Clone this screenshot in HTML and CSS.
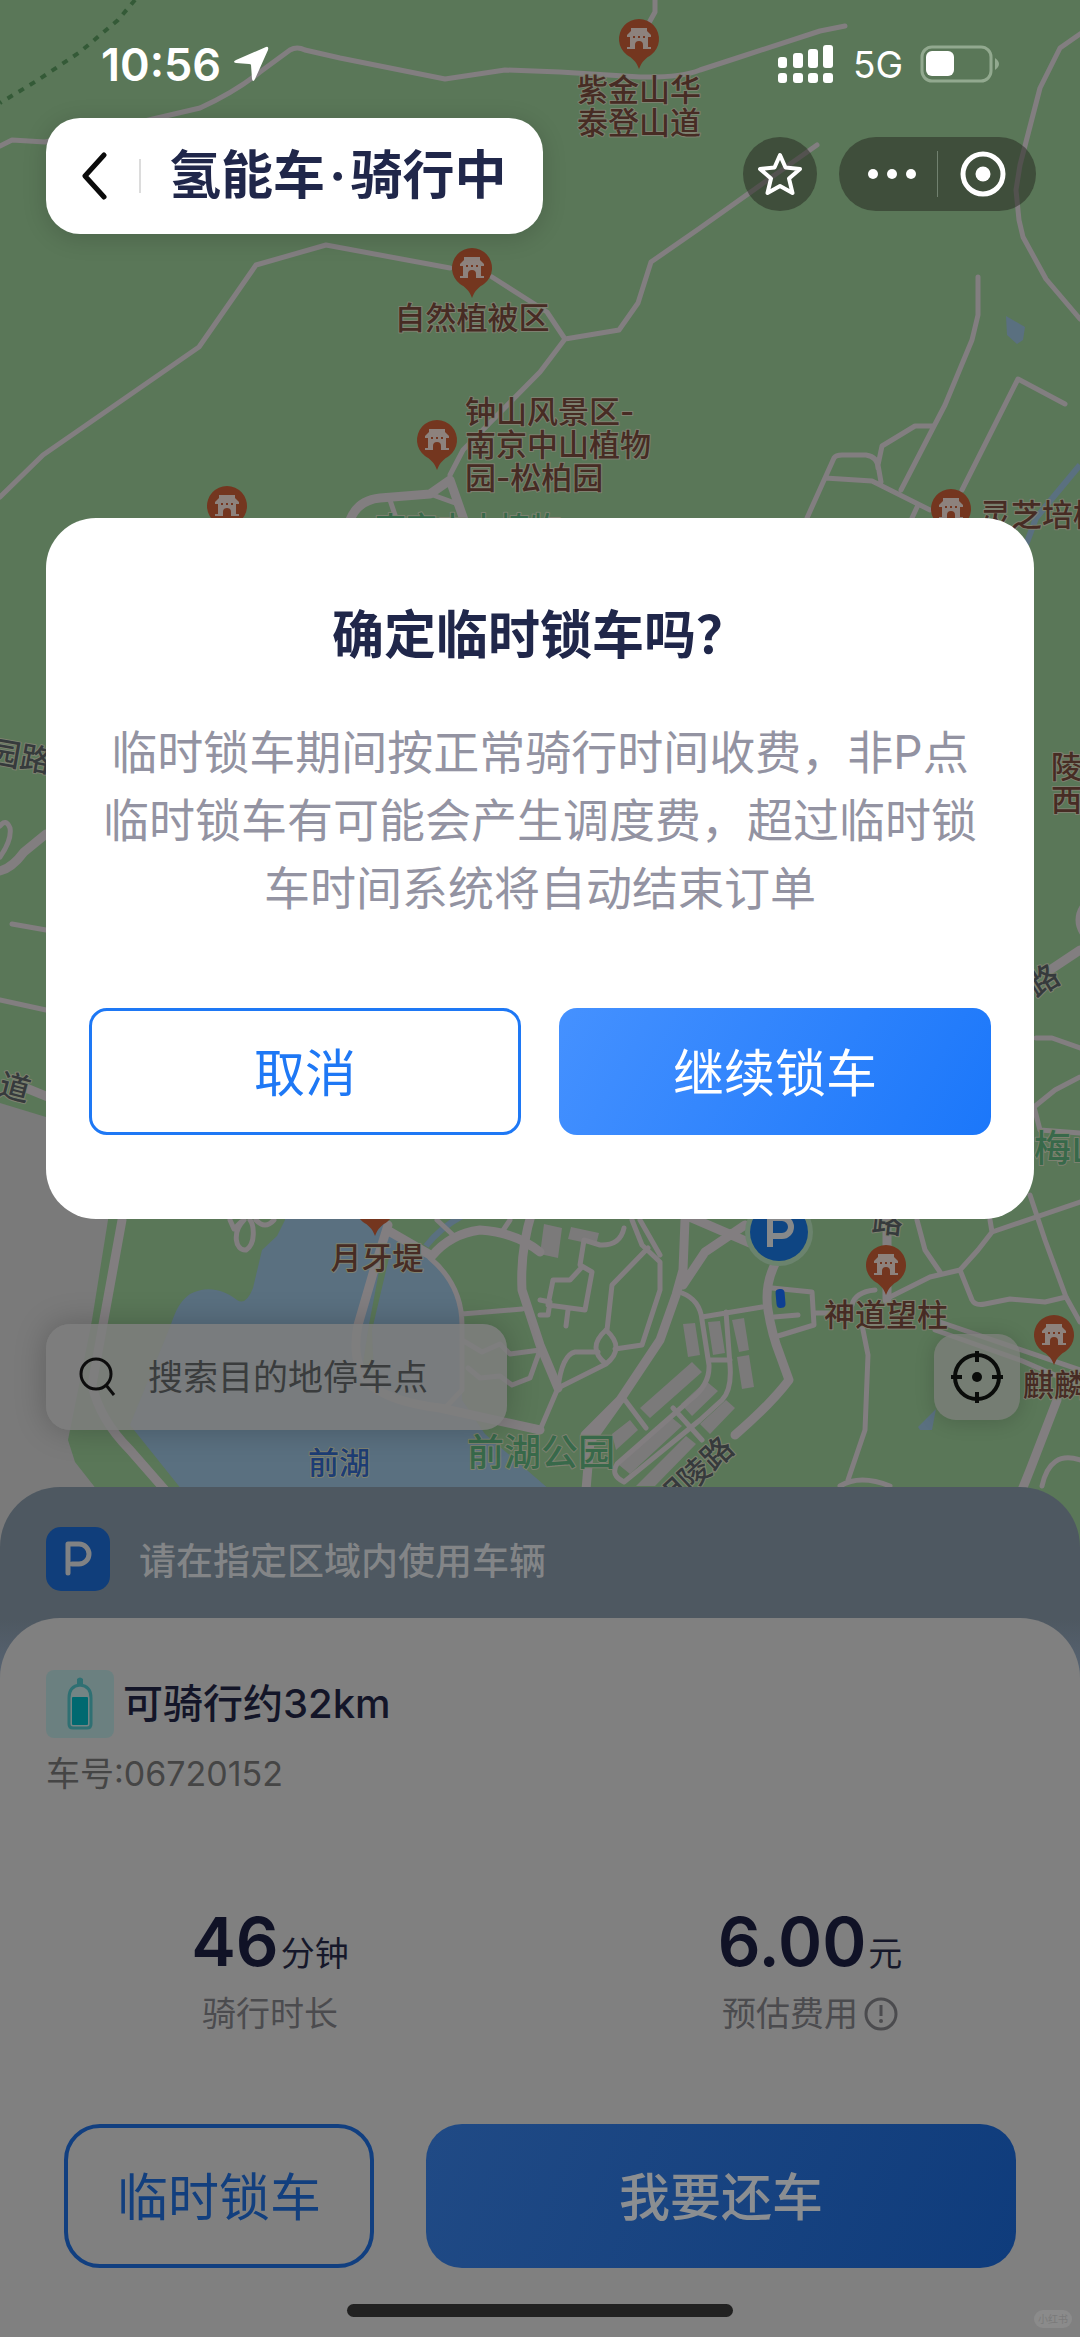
FILE: index.html
```html
<!DOCTYPE html>
<html lang="zh-CN">
<head>
<meta charset="utf-8">
<meta name="viewport" content="width=device-width, initial-scale=1">
<title>氢能车·骑行中</title>
<link rel="stylesheet" href="styles.css">
</head>
<body>
<div class="screen">
  <main class="stage">
    <svg class="map" viewBox="0 0 1080 1700" preserveAspectRatio="xMidYMin slice" aria-hidden="true">
      <defs>
        <g id="pin">
          <path d="M0 30C-3 22-7 19-12 16A20 20 0 1 1 12 16C7 19 3 22 0 30Z" fill="#74361f"/>
          <path d="M-8-11H8V-8L12-4V-2H9V8H12V10H4V6A4 4 0 0 0-4 6V10H-12V8H-9V-2H-12V-4L-8-8Z" fill="#8d827d"/>
          <path d="M-6-3h2v2h-2zM-1-3h2v2h-2zM4-3h2v2h-2z" fill="#74361f"/>
        </g>
      </defs>
      <rect width="1080" height="1700" fill="#5a7758"/>
      <path fill="#7a7a7a" d="M0 1103L46 1117L112 1150L108 1220L92 1320L68 1440L75 1462L97 1490L130 1540L130 1700H0Z"/>
      <g fill="#5a7080">
        <path d="M285 1200V1220L277 1236L262 1250L253 1288Q246 1306 237 1300C222 1288 205 1286 190 1294C176 1304 174 1318 168 1332L130 1425L182 1490H550L485 1434L462 1400V1320C460 1290 440 1262 420 1250L390 1236L372 1200Z"/>
        <path d="M1006 316L1025 327L1023 340L1017 344L1007 335ZM918 1427L936 1409L932 1430H920Z"/>
      </g>
      <path d="M1080 465L1055 495L1036 518L1026 545M426 1246Q440 1228 462 1216" stroke="#5a7080" stroke-width="6" fill="none"/>
      <path d="M383 1250L368 1330L362 1370L374 1376L372 1330L389 1258Z" fill="#5a7758"/>
      <path d="M135 0L118 20L80 52L38 80L0 103" stroke="#345a37" stroke-width="4" stroke-dasharray="6 7" fill="none"/>
      <g class="lots">
        <path d="M683 1324l12-1 5 32-12 2zM708 1322l12-1 5 32-12 2zM732 1320l12-2 5 32-10 2zM737 1357l12-2 5 32-12 2z"/>
        <path d="M640 1408L692 1362L702 1372L650 1418ZM681 1404L706 1381L718 1391L692 1416ZM700 1424L726 1400L735 1408L710 1434ZM619 1465L671 1417L682 1426L630 1474ZM612 1434L630 1420L638 1430L616 1450ZM636 1486L686 1436L696 1444L655 1486Z"/>
        <path d="M571 1227l28 6-3 12-28-6zM544 1224l18 4-4 30-18-4z"/>
      </g>
      <g class="road">
        <path d="M0 146L12 140L45 142L140 122L200 108Q235 92 260 72L290 50Q297 46 305 50L340 58L445 79L505 70L560 72L640 77Q680 78 700 70L740 57L820 31L845 26M655 0V12L645 30"/>
        <path d="M1080 34L1060 48L1040 88L1020 165L1016 190L1019 220L1023 237L1046 279L1080 319"/>
        <path d="M817 145L700 228L651 262L638 303L619 330L565 339L540 372L463 450L450 475M565 339L547 312L492 277M450 268L326 245L256 265L199 347L43 455L0 497"/>
        <path d="M390 500L396 518M430 494L455 503M978 277V315L972 340L945 405L932 430L901 490M932 426H915L882 446L878 465L881 482M807 518L825 478L834 458Q836 455 842 455H866Q878 457 878 468M825 478L872 481L930 510M1065 404L1018 379L962 490M918 505L912 518"/>
        <path d="M0 857Q12 840 10 828Q6 818 0 826M12 924L46 930M0 1000L46 1010M1036 1038H1052L1080 1048M1080 1077L1055 1090L1034 1107L1040 1130L1080 1133M1030 1195L1045 1240L1066 1297L1080 1322"/>
        <path d="M244 1220C232 1232 235 1251 246 1250C256 1244 254 1225 250 1220M230 1220L234 1229L241 1222M256 1220Q265 1230 274 1220"/>
        <path d="M430 1258Q462 1285 462 1325V1390L445 1408M462 1314L522 1309M437 1220L453 1235M510 1220L502 1232M462 1340L482 1352L500 1344L510 1354L540 1350L530 1378L512 1385L500 1376L480 1378L468 1368"/>
        <path d="M632 1220L642 1245L660 1262V1290L642 1345L615 1349M640 1220L660 1255M624 1228Q620 1246 600 1245L584 1240L580 1265L592 1272L585 1310L548 1305L553 1280H570L582 1267M648 1248L612 1285L607 1330M606 1330Q586 1348 606 1364Q626 1348 606 1330M598 1352L575 1352Q562 1355 558 1388M606 1364L558 1388L540 1430M568 1310L566 1326M540 1300L550 1302L548 1315H540"/>
        <path d="M682 1293Q700 1300 702 1320L709 1365Q710 1385 690 1400L617 1464Q610 1475 624 1482L700 1420L722 1400Q732 1390 730 1365L726 1312M702 1317L762 1307M709 1360H730M673 1408L702 1440M625 1400L646 1428M772 1288L812 1292L814 1325L778 1336M774 1317L798 1315M814 1313H830"/>
        <path d="M852 1305Q855 1292 875 1290M888 1298L930 1277L960 1270L978 1250L992 1232L1080 1202M917 1220L925 1250L940 1272M960 1270L972 1300Q975 1306 985 1304L1010 1299L1045 1302L1066 1297M992 1232L990 1220M862 1325L868 1355L865 1430L848 1480M840 1486Q860 1474 890 1486M940 1322L1080 1370M935 1330L1020 1360L1080 1386M1042 1486Q1050 1450 1080 1460"/>
      </g>
      <g class="road road-wide">
        <path d="M350 520Q358 500 380 498L430 494L450 480L464 520"/>
        <path d="M0 871Q12 868 24 852L46 834M26 1088L48 1097M1080 950L1050 970M1090 900Q1070 920 1090 940"/>
        <path d="M122 1220L102 1330L92 1385Q100 1420 130 1450L165 1490"/>
        <path d="M388 1225L374 1270L358 1325Q350 1365 372 1386Q392 1402 440 1408L540 1430M387 1230L432 1256Q450 1234 480 1230Q515 1232 540 1252M532 1212Q520 1250 522 1290L540 1345L558 1388"/>
        <path d="M685 1220L683 1270L676 1295L660 1340L620 1400L590 1442L586 1490M745 1225L705 1252L683 1285M692 1218L750 1243M622 1398L585 1435M776 1262Q764 1285 768 1310Q772 1335 780 1355L789 1380Q770 1405 735 1435M887 1220V1300M1057 1400L1030 1470L1022 1490"/>
      </g>
      <circle cx="779" cy="1232" r="34" fill="#6b836d"/>
      <circle cx="779" cy="1232" r="29" fill="#0e4583"/>
      <path d="M770 1247V1218H782A9 9 0 0 1 782 1236H770" fill="none" stroke="#87898a" stroke-width="6"/>
      <rect x="776" y="1289" width="9" height="19" rx="4" transform="rotate(-5 780 1298)" fill="#0d3f92"/>
      <use href="#pin" x="639" y="39"/><use href="#pin" x="472" y="268"/><use href="#pin" x="437" y="440"/><use href="#pin" x="227" y="506"/><use href="#pin" x="951" y="509"/><use href="#pin" x="375" y="1206"/><use href="#pin" x="886" y="1265"/><use href="#pin" x="1054" y="1335"/>
      <g class="place">
        <text x="639" y="101" text-anchor="middle">紫金山华</text><text x="639" y="134" text-anchor="middle">泰登山道</text>
        <text x="472" y="329" text-anchor="middle">自然植被区</text>
        <text x="465" y="423">钟山风景区-</text><text x="465" y="456">南京中山植物</text><text x="465" y="489">园-松柏园</text>
        <text x="980" y="526">灵芝培植</text>
        <text x="1051" y="778">陵</text><text x="1051" y="811">西</text>
        <text x="377" y="1269" text-anchor="middle">月牙堤</text><text x="886" y="1326" text-anchor="middle">神道望柱</text><text x="1023" y="1396">麒麟</text>
      </g>
      <g class="place street">
        <text x="-12" y="762" transform="rotate(10 -12 762)">园路</text><text x="-3" y="1094" transform="rotate(15 -3 1094)">道</text>
        <text x="1036" y="998" transform="rotate(-32 1036 998)">路</text><text x="871" y="1231" transform="rotate(6 871 1231)">路</text>
        <text x="668" y="1514" transform="rotate(-43 668 1514)">明陵路</text>
      </g>
      <g class="place park"><text x="375" y="539" class="place-small">南京中山植物</text><text x="1034" y="1162">梅山</text><text x="467" y="1466">前湖公园</text></g>
      <text class="place lake" x="339" y="1474" text-anchor="middle">前湖</text>
    </svg>

    <div class="status">
      <time>10:56</time>
      <svg class="status-arrow" width="36" height="36" viewBox="0 0 36 36"><path d="M33 1Q36 0 35 4L22 33Q20 37 19 33L18 19Q18 18 16 18L3 17Q-1 16 3 14Z" fill="#fff"/></svg>
      <svg class="status-signal" width="56" height="38" viewBox="0 0 56 38" fill="#fff"><rect y="12" width="9" height="11" rx="3"/><rect x="15" y="8" width="10" height="15" rx="3"/><rect x="30" y="4" width="10" height="19" rx="3"/><rect x="45" width="10" height="23" rx="3"/><rect y="28" width="9" height="10" rx="3"/><rect x="15" y="28" width="10" height="10" rx="3"/><rect x="30" y="28" width="10" height="10" rx="3"/><rect x="45" y="28" width="10" height="10" rx="3"/></svg>
      <span class="network">5G</span>
      <svg width="80" height="38" viewBox="0 0 80 38"><rect x="2" y="2" width="69" height="34" rx="10" fill="none" stroke="#92a98f" stroke-width="3"/><rect x="6" y="6" width="28" height="25" rx="6" fill="#fff"/><path d="M75 13Q79 16 79 19T75 25Z" fill="#92a98f"/></svg>
    </div>

    <header class="nav">
      <div class="title-pill">
        <button class="back" type="button" aria-label="返回"><svg width="26" height="48" viewBox="0 0 26 48"><path d="M23 3L4 24L23 45" fill="none" stroke="#0b0b0b" stroke-width="5" stroke-linecap="round" stroke-linejoin="round"/></svg></button>
        <h1>氢能车<span class="dot">·</span>骑行中</h1>
      </div>
      <button class="round star" type="button" aria-label="收藏"><svg width="48" height="48" viewBox="0 0 48 48"><path d="M24 5L29.500 17.500L44 19L33 28.500L36.500 43L24 36L11.500 43L15 28.500L4 19L18.500 17.500Z" fill="none" stroke="#fff" stroke-width="4" stroke-linejoin="round"/></svg></button>
      <div class="capsule">
        <button type="button" aria-label="更多"><svg width="48" height="12" viewBox="0 0 48 12" fill="#fff"><circle cx="5" cy="6" r="5"/><circle cx="24" cy="6" r="5"/><circle cx="43" cy="6" r="5"/></svg></button>
        <button type="button" aria-label="关闭"><svg width="46" height="46" viewBox="0 0 46 46"><circle cx="23" cy="23" r="20" fill="none" stroke="#fff" stroke-width="5"/><circle cx="23" cy="23" r="7.500" fill="#fff"/></svg></button>
      </div>
    </header>

    <div class="tools">
      <label class="search">
        <svg width="40" height="42" viewBox="0 0 40 42"><circle cx="18" cy="18" r="15" fill="none" stroke="#0d0d0d" stroke-width="3"/><path d="M28 29L36 39" stroke="#0d0d0d" stroke-width="3"/></svg>
        <input type="text" placeholder="搜索目的地停车点" aria-label="搜索目的地停车点">
      </label>
      <button class="locate" type="button" aria-label="定位"><svg width="54" height="54" viewBox="0 0 54 54" fill="none" stroke="#0a0c0a" stroke-width="4"><circle cx="27" cy="27" r="22"/><path d="M27 1V12M27 42V53M1 27H12M42 27H53"/><circle cx="27" cy="27" r="5" fill="#0a0c0a" stroke="none"/></svg></button>
    </div>
  </main>

  <section class="sheet">
    <p class="notice">
      <svg width="64" height="64" viewBox="0 0 64 64"><rect width="64" height="64" rx="15" fill="#103e7b"/><path d="M22 46V17H33A10 10 0 0 1 33 37H26" fill="none" stroke="#808284" stroke-width="5" stroke-linecap="round" stroke-linejoin="round"/></svg>
      请在指定区域内使用车辆
    </p>
    <div class="card">
      <h2 class="range">
        <svg width="68" height="68" viewBox="0 0 68 68"><rect width="68" height="68" rx="8" fill="#6b8080"/><path d="M31 9Q34 6 37 9V16H31Z" fill="#2f7073"/><path d="M23 28Q23 16 34 15Q45 16 45 28V54Q45 58 41 58H27Q23 58 23 54Z" fill="#748484" stroke="#2f7073" stroke-width="3"/><rect x="26" y="27" width="16" height="28" rx="1" fill="#006970"/></svg>
        可骑行约32km
      </h2>
      <p class="bike-number">车号:06720152</p>
      <dl class="stats">
        <div><dd><strong>46</strong>分钟</dd><dt>骑行时长</dt></div>
        <div><dd><strong>6.00</strong>元</dd><dt>预估费用<svg width="34" height="34" viewBox="0 0 34 34"><circle cx="17" cy="17" r="15" fill="none" stroke="#4b4b4e" stroke-width="3"/><path d="M17 8V19" stroke="#4b4b4e" stroke-width="3"/><circle cx="17" cy="24" r="2" fill="#4b4b4e"/></svg></dt></div>
      </dl>
      <div class="actions">
        <button class="lock" type="button">临时锁车</button>
        <button class="return" type="button">我要还车</button>
      </div>
      <div class="home-indicator"></div>
    </div>
    <span class="watermark">小红书</span>
  </section>

  <div class="modal-layer">
    <div class="modal" role="dialog" aria-modal="true" aria-labelledby="modal-title">
      <h2 id="modal-title">确定临时锁车吗？</h2>
      <p>临时锁车期间按正常骑行时间收费，非P点临时锁车有可能会产生调度费，超过临时锁车时间系统将自动结束订单</p>
      <div class="modal-actions">
        <button class="cancel" type="button">取消</button>
        <button class="confirm" type="button">继续锁车</button>
      </div>
    </div>
  </div>
</div>
</body>
</html>
```
FILE: styles.css
```css
* { box-sizing: border-box; }
body, h1, h2, p, dl, dd { margin: 0; }
body, button, input { font-family: Inter, "Noto Sans CJK SC", sans-serif; }
button { padding: 0; border: 0; background: none; }
svg { display: block; flex: none; }

.screen {
  position: relative;
  display: flex;
  flex-direction: column;
  min-height: 100vh;
  overflow: hidden;
  background: #808080;
}

.stage {
  position: relative;
  flex: 1;
  display: flex;
  flex-direction: column;
}
.map { position: absolute; top: 0; left: 0; width: 100%; height: 1700px; }
.road { fill: none; stroke: #827e80; stroke-width: 5; stroke-linejoin: round; stroke-linecap: round; }
.road-wide { stroke-width: 9; }
.lots { fill: #7b7a7a; }
.place {
  font-size: 31px;
  font-weight: 500;
  fill: #472c24;
  stroke: #7d8170;
  stroke-width: 2px;
  stroke-linejoin: round;
  paint-order: stroke;
}
.street { fill: #363a3c; }
.park { fill: #38694a; font-size: 37px; }
.place-small { font-size: 31px; }
.lake { fill: #1d3d74; }

.status {
  position: relative;
  display: flex;
  align-items: center;
  height: 118px;
  padding: 10px 80px 0 101px;
  color: #fff;
}
.status time { font-size: 45px; font-weight: 600; }
.status-arrow { margin-left: 12px; }
.status-signal { margin-left: auto; }
.network { margin: 0 17px 0 19px; font-size: 37px; }

.nav {
  position: relative;
  display: flex;
  align-items: center;
  padding: 0 44px 0 46px;
}
.title-pill {
  display: flex;
  align-items: center;
  height: 116px;
  margin-right: auto;
  padding: 0 37px 0 35px;
  border-radius: 34px;
  background: #fff;
  box-shadow: 0 4px 24px rgba(0, 0, 0, .16);
}
.back { display: flex; align-items: center; height: 48px; }
.title-pill h1 {
  display: flex;
  align-items: center;
  font-size: 52px;
  line-height: 72px;
  font-weight: 700;
  color: #20274a;
}
.title-pill h1::before {
  content: "";
  width: 2px;
  height: 34px;
  margin: 0 28px 0 32px;
  background: #dcdcdc;
}
.dot { padding: 0 4px; }
.round, .capsule {
  height: 74px;
  margin-bottom: 4px;
  border-radius: 37px;
  background: rgba(36, 38, 30, .5);
}
.round { display: grid; place-items: center; width: 74px; margin-right: 22px; }
.capsule { display: flex; align-items: center; width: 197px; }
.capsule button { display: grid; flex: 1; place-items: center; height: 46px; padding-right: 8px; }
.capsule button:first-child { padding: 0 0 0 8px; border-right: 1px solid #71816f; }

.tools {
  position: relative;
  display: flex;
  align-items: center;
  justify-content: space-between;
  margin-top: auto;
  padding: 0 60px 57px 46px;
}
.search {
  display: flex;
  align-items: center;
  gap: 30px;
  width: 461px;
  height: 106px;
  padding: 0 32px;
  border-radius: 24px;
  background: rgba(126, 126, 126, .86);
  box-shadow: 0 0 32px rgba(0, 0, 0, .22);
}
.search input {
  flex: 1;
  min-width: 0;
  padding: 0;
  border: 0;
  background: none;
  font-size: 35px;
  color: #3a3c3d;
}
.search input::placeholder { color: #3a3c3d; opacity: 1; }
.locate {
  display: grid;
  place-items: center;
  width: 86px;
  height: 86px;
  border-radius: 22px;
  background: rgba(126, 128, 124, .76);
  box-shadow: 0 2px 20px rgba(0, 0, 0, .16);
}

.sheet {
  position: relative;
  border-radius: 60px 60px 0 0;
  background: linear-gradient(#4e5861 132px, #566270 180px, #808080 200px);
}
.notice {
  display: flex;
  align-items: center;
  gap: 29px;
  padding: 40px 46px 27px;
  font-size: 37px;
  font-weight: 500;
  color: #838587;
}
.card {
  display: flex;
  flex-direction: column;
  padding: 52px 0 20px;
  border-radius: 60px 60px 0 0;
  background: #808080;
}
.range {
  display: flex;
  align-items: center;
  gap: 9px;
  padding: 0 46px;
  font-size: 40px;
  line-height: 64px;
  font-weight: 500;
  color: #131528;
}
.bike-number {
  margin-top: 12px;
  padding: 0 46px;
  font-size: 34px;
  line-height: 48px;
  color: #454545;
}
.stats {
  display: grid;
  grid-template-columns: 1fr 1fr;
  margin-top: 104px;
  text-align: center;
}
.stats div { display: flex; flex-direction: column; align-items: center; }
.stats dd {
  display: flex;
  align-items: baseline;
  gap: 2px;
  font-size: 34px;
  line-height: 40px;
  color: #16182a;
}
.stats strong { font-size: 67px; line-height: 80px; font-weight: 600; color: #101226; }
.stats dt {
  display: flex;
  align-items: center;
  gap: 6px;
  order: 1;
  margin-top: 8px;
  font-size: 34px;
  line-height: 48px;
  color: #4b4b4e;
}
.actions {
  display: grid;
  grid-template-columns: 310fr 590fr;
  gap: 52px;
  margin-top: 86px;
  padding: 0 64px;
}
.actions button { height: 144px; padding-bottom: 4px; border-radius: 36px; font-size: 51px; }
.lock { border: 4px solid #113f80; color: #123f7e; }
.actions .return {
  font-weight: 500;
  color: #8b8e91;
  background: linear-gradient(110deg, #204a85, #0f3c7c);
}
.home-indicator {
  width: 386px;
  height: 13px;
  margin: 36px auto 0;
  border-radius: 7px;
  background: #212121;
}
.watermark {
  position: absolute;
  right: 8px;
  bottom: 9px;
  padding: 0 4px;
  border-radius: 9px;
  background: #8b8b8b;
  font-size: 10px;
  line-height: 18px;
  color: #7a7a7a;
}

.modal-layer {
  position: absolute;
  inset: 0;
  display: flex;
  align-items: center;
  padding: 0 46px 600px;
}
.modal {
  flex: 1;
  padding: 82px 43px 84px;
  border-radius: 50px;
  background: #fff;
  text-align: center;
}
.modal h2 { font-size: 52px; line-height: 72px; font-weight: 700; color: #20274a; }
.modal p {
  margin-top: 46px;
  padding: 0 12px;
  font-size: 46px;
  line-height: 68px;
  color: #9393a2;
}
.modal-actions { display: grid; grid-template-columns: 1fr 1fr; gap: 38px; margin-top: 86px; }
.modal-actions button { height: 127px; padding-bottom: 4px; border-radius: 18px; font-size: 51px; }
.cancel { border: 3px solid #1e78f5; color: #1e78f5; }
.modal-actions .confirm { color: #fff; background: linear-gradient(120deg, #4591ff, #1b77fa); }
```
